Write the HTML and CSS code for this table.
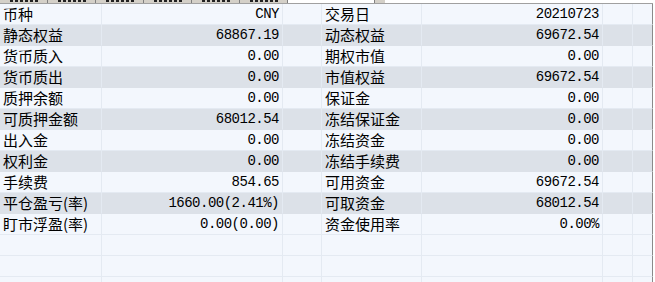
FILE: index.html
```html
<!DOCTYPE html>
<html>
<head>
<meta charset="utf-8">
<link rel="stylesheet" href="styles.css">
</head>
<body>
<div class="page">
  <div class="tabs">
    <div class="tab"><span class="frag"></span></div>
    <div class="tab"><span class="frag"></span></div>
    <div class="tab"><span class="frag"></span></div>
    <div class="tab"><span class="frag"></span></div>
    <div class="tab"><span class="frag"></span></div>
    <div class="tab"><span class="frag"></span></div>
    <div class="tab active"></div>
    <div class="tab small"></div>
  </div>
  <div class="grid">
    <div class="row"><div class="c lab">币种</div><div class="c val">CNY</div><div class="c"></div><div class="c lab">交易日</div><div class="c val">20210723</div><div class="c"></div><div class="c last"></div></div>
    <div class="row alt"><div class="c lab">静态权益</div><div class="c val">68867.19</div><div class="c"></div><div class="c lab">动态权益</div><div class="c val">69672.54</div><div class="c"></div><div class="c last"></div></div>
    <div class="row"><div class="c lab">货币质入</div><div class="c val">0.00</div><div class="c"></div><div class="c lab">期权市值</div><div class="c val">0.00</div><div class="c"></div><div class="c last"></div></div>
    <div class="row alt"><div class="c lab">货币质出</div><div class="c val">0.00</div><div class="c"></div><div class="c lab">市值权益</div><div class="c val">69672.54</div><div class="c"></div><div class="c last"></div></div>
    <div class="row"><div class="c lab">质押余额</div><div class="c val">0.00</div><div class="c"></div><div class="c lab">保证金</div><div class="c val">0.00</div><div class="c"></div><div class="c last"></div></div>
    <div class="row alt"><div class="c lab">可质押金额</div><div class="c val">68012.54</div><div class="c"></div><div class="c lab">冻结保证金</div><div class="c val">0.00</div><div class="c"></div><div class="c last"></div></div>
    <div class="row"><div class="c lab">出入金</div><div class="c val">0.00</div><div class="c"></div><div class="c lab">冻结资金</div><div class="c val">0.00</div><div class="c"></div><div class="c last"></div></div>
    <div class="row alt"><div class="c lab">权利金</div><div class="c val">0.00</div><div class="c"></div><div class="c lab">冻结手续费</div><div class="c val">0.00</div><div class="c"></div><div class="c last"></div></div>
    <div class="row"><div class="c lab">手续费</div><div class="c val">854.65</div><div class="c"></div><div class="c lab">可用资金</div><div class="c val">69672.54</div><div class="c"></div><div class="c last"></div></div>
    <div class="row alt"><div class="c lab">平仓盈亏(率)</div><div class="c val">1660.00(2.41%)</div><div class="c"></div><div class="c lab">可取资金</div><div class="c val">68012.54</div><div class="c"></div><div class="c last"></div></div>
    <div class="row"><div class="c lab">盯市浮盈(率)</div><div class="c val">0.00(0.00)</div><div class="c"></div><div class="c lab">资金使用率</div><div class="c val">0.00%</div><div class="c"></div><div class="c last"></div></div>
    <div class="row"><div class="c"></div><div class="c"></div><div class="c"></div><div class="c"></div><div class="c"></div><div class="c"></div><div class="c last"></div></div>
    <div class="row"><div class="c"></div><div class="c"></div><div class="c"></div><div class="c"></div><div class="c"></div><div class="c"></div><div class="c last"></div></div>
    <div class="row"><div class="c"></div><div class="c"></div><div class="c"></div><div class="c"></div><div class="c"></div><div class="c"></div><div class="c last"></div></div>
  </div>
</div>
</body>
</html>
```

FILE: styles.css
```css
html, body {
  margin: 0;
  padding: 0;
  background: #ffffff;
  overflow: hidden;
}
.page {
  width: 655px;
  height: 282px;
  overflow: hidden;
}
.tabs {
  display: flex;
  height: 3px;
  background: #d4d0c8;
  width: 385px;
}
.tab {
  width: 47px;
  height: 3px;
  border-right: 1px solid #808080;
  display: flex;
  justify-content: center;
}
.tab .frag {
  width: 28px;
  height: 2px;
  background: repeating-linear-gradient(90deg, #222 0 3px, transparent 3px 5px);
}
.tab.active {
  width: 86px;
  background: #ffffff;
  border-right: 1px solid #808080;
}
.tab.small {
  width: 9px;
  border-right: none;
}
.grid {
  width: 653px;
  border-top: 1px solid #a0a0a0;
  background: #f3f7fd;
  font-family: "Noto Sans CJK SC", "Noto Sans", sans-serif;
  font-size: 15px;
  color: #000;
}
.row {
  display: grid;
  grid-template-columns: 102px 181px 39px 100px 181px 30px 20px;
  height: 21px;
}
.row.alt {
  background: #dce1e8;
}
.c {
  box-sizing: border-box;
  height: 21px;
  border-right: 1px solid #e4eaf2;
  border-bottom: 1px solid #e4eaf2;
  line-height: 20px;
  white-space: nowrap;
  overflow: hidden;
}
.row.alt .c {
  border-bottom-color: #dce1e8;
}
.c.last {
  border-right: 1px solid #8a8a8a;
}
.lab {
  padding-left: 3px;
}
.val {
  text-align: right;
  padding-right: 3px;
  font-family: "Liberation Mono", "DejaVu Sans Mono", monospace;
  font-size: 14px;
  letter-spacing: -0.5px;
}
```
